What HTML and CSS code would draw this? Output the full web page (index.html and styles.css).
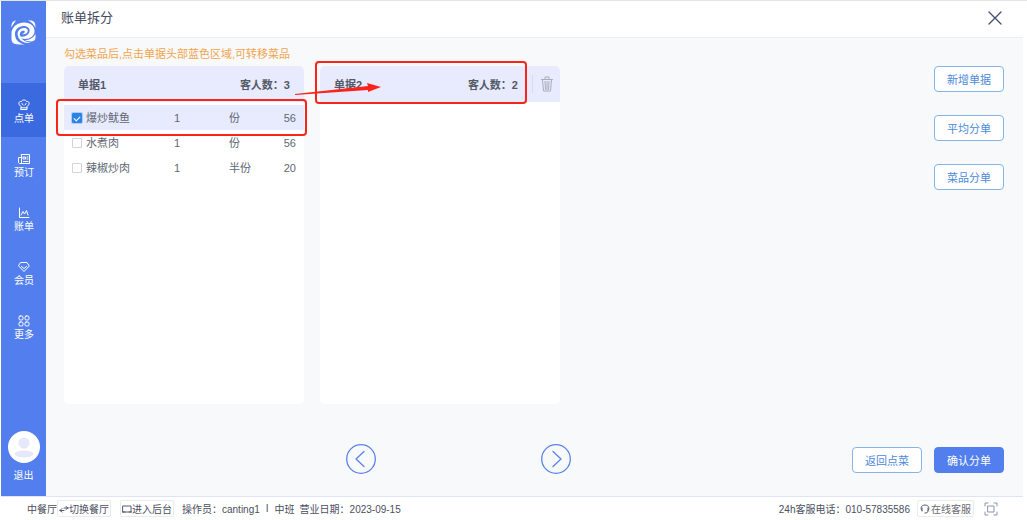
FILE: index.html
```html
<!DOCTYPE html>
<html lang="zh-CN">
<head>
<meta charset="utf-8">
<meta name="viewport" content="width=device-width, initial-scale=1">
<title>账单拆分</title>
<link rel="stylesheet" href="styles.css">
</head>
<body>
<div class="app">
  <div class="workspace">
    <nav class="sidebar">
      <svg class="logo" viewBox="0 0 25 25" aria-label="logo">
        <path fill="#fff" d="M5 .5C1.500 1 .5 3 .3 7.500C2 4.500 3.500 2.500 5 .5Z"/>
        <path fill="#fff" d="M17 .5H20C23.500 1 24.500 3 24.500 8C23 4.500 20.500 2 17 .5Z"/>
        <path fill="#fff" d="M.5 12C2 6 7 2.500 13 2.500C20 2.500 24 6.500 23.500 12C23 17 17 20 11 18.500C9.500 18 8.500 17 8 16C11 17.500 16 16.500 18 13C20 9 17 6 13 6C7 6 3.500 10 4 15C4.500 20 8 23.500 14 24.500C5 25 .5 24 .5 19Z"/>
        <path fill="#fff" d="M7 16C5.500 11.500 9 8 13 8C16 8 17.500 10 16.500 12C15.500 14 13 14.500 11 14C13 13.500 14.500 12 13.500 11C12 10 9 11 8.800 14C8.800 19 14 22 20 22.500C14 24 8 21 7 16Z"/>
        <path fill="#fff" d="M24.500 14V18C24 20.500 22.500 21.500 20 21.500C17 21.500 15 21 14 20.300C19 20 22.500 17.500 24.500 14Z"/>
      </svg>
      <ul class="menu">
        <li><a class="menu-item active" href="#">
          <svg class="menu-icon" viewBox="0 0 12 12"><path d="M3 7.500L1.500 6C0 4 1.500 2 3.500 2.500C4 .5 8 .5 8.500 2.500C10.500 2 12 4 10.500 6L9 7.500V10.500H3ZM3 8.800H9M4 4.500L5 6M8 4.500L7 6"/></svg>
          <span>点单</span></a></li>
        <li><a class="menu-item" href="#">
          <svg class="menu-icon" viewBox="0 0 12 12"><path d="M3.500 1.500H11.500V10.500H2C1 10.500.5 10 .5 9V4.500H3.500ZM3.500 4V10M5.500 4H7.500V6H5.500ZM9 4H10M9 6H10M5.500 8.500H10"/></svg>
          <span>预订</span></a></li>
        <li><a class="menu-item" href="#">
          <svg class="menu-icon" viewBox="0 0 12 12"><path d="M1.500 1V10.500H11M3 8L5 4.500L6.500 7L8.500 3.500L10 8"/></svg>
          <span>账单</span></a></li>
        <li><a class="menu-item" href="#">
          <svg class="menu-icon" viewBox="0 0 12 12"><path d="M3 1.500H9L11.300 5L6 10.500L.7 5ZM3.500 5.500L6 7.500L8.500 5.500"/></svg>
          <span>会员</span></a></li>
        <li><a class="menu-item" href="#">
          <svg class="menu-icon" viewBox="0 0 12 12"><rect x="1" y="1" width="4" height="4" rx="1.200"/><rect x="7" y="1" width="4" height="4" rx="1.200"/><rect x="1" y="7" width="4" height="4" rx="1.200"/><rect x="7" y="7" width="4" height="4" rx="1.200"/></svg>
          <span>更多</span></a></li>
      </ul>
      <a class="logout" href="#">
        <svg class="avatar" viewBox="0 0 32 32"><circle cx="16" cy="16" r="16" fill="#fff"/><circle cx="16" cy="12" r="5.500" fill="#e3e9fb"/><ellipse cx="16" cy="23" rx="9.500" ry="3.500" fill="#e3e9fb"/></svg>
        <span>退出</span>
      </a>
    </nav>
    <div class="page">
      <header class="titlebar">
        <h1>账单拆分</h1>
        <button class="close" type="button" aria-label="关闭"><svg viewBox="0 0 14 14"><path d="M1 1L13 13M13 1L1 13"/></svg></button>
      </header>
      <main class="content">
        <section class="split">
          <p class="tip">勾选菜品后,点击单据头部蓝色区域,可转移菜品</p>
          <div class="bills">
            <article class="bill">
              <header class="bill-head"><h2>单据1</h2><span>客人数：3</span></header>
              <table class="dishes">
                <colgroup><col><col class="col-count"><col class="col-unit"><col class="col-price"></colgroup>
                <tr class="selected"><td><label><input type="checkbox" checked>爆炒鱿鱼</label></td><td>1</td><td>份</td><td class="price">56</td></tr>
                <tr><td><label><input type="checkbox">水煮肉</label></td><td>1</td><td>份</td><td class="price">56</td></tr>
                <tr><td><label><input type="checkbox">辣椒炒肉</label></td><td>1</td><td>半份</td><td class="price">20</td></tr>
              </table>
              <div class="mark mark-row"></div>
            </article>
            <article class="bill">
              <header class="bill-head has-delete"><h2>单据2</h2><span>客人数：2</span>
                <button class="delete" type="button" aria-label="删除"><svg viewBox="0 0 12 16"><path d="M.5 3.500H11.500M4 3V1H8V3M1.500 4L2.500 15H9.500L10.500 4M4 5.500L4.500 13.500M6 5.500V13.500M8 5.500L7.500 13.500"/></svg></button>
              </header>
              <div class="mark mark-head"></div>
              <svg class="arrow" viewBox="0 0 90 16"><path d="M1 12L74 4L73 1L87 5L74 10V8L1 13Z" fill="#f9251b"/></svg>
            </article>
          </div>
          <div class="pager">
            <button type="button" aria-label="上一页"><svg viewBox="0 0 30 30"><circle cx="15" cy="15" r="14.300"/><path d="M18 7.500L10 15L18 22.500"/></svg></button>
            <button type="button" aria-label="下一页"><svg viewBox="0 0 30 30"><circle cx="15" cy="15" r="14.300"/><path d="M12 7.500L20 15L12 22.500"/></svg></button>
          </div>
        </section>
        <aside class="actions">
          <div class="action-list">
            <button class="btn" type="button">新增单据</button>
            <button class="btn" type="button">平均分单</button>
            <button class="btn" type="button">菜品分单</button>
          </div>
          <div class="confirm">
            <button class="btn" type="button">返回点菜</button>
            <button class="btn primary" type="button">确认分单</button>
          </div>
        </aside>
      </main>
    </div>
  </div>
  <footer class="statusbar">
    <span>中餐厅</span>
    <button class="mini" type="button"><svg viewBox="0 0 10 10"><path d="M1 6.500H5M1 6.500L3 4.500M1 6.500L3 8M5 4H9M9 4L7 2.500M9 4L7 5.500"/></svg>切换餐厅</button>
    <button class="mini enter" type="button"><svg viewBox="0 0 10 10"><path d="M1 2H9V8H1ZM0 8H3M7 8H10"/></svg>进入后台</button>
    <span class="operator">操作员：canting1</span>
    <span class="bar">I</span>
    <span>中班</span>
    <span class="date">营业日期：2023-09-15</span>
    <span class="phone">24h客服电话：010-57835586</span>
    <button class="mini service" type="button"><svg viewBox="0 0 10 10"><path d="M2 6.500C0 5 1 1 5 1S10 5 8 6.500M2 4V7M8 4V7C8 8.500 7 9 5 9"/></svg>在线客服</button>
    <button class="fullscreen" type="button" aria-label="全屏"><svg viewBox="0 0 14 14"><path d="M1 4V1H4M10 1H13V4M13 10V13H10M4 13H1V10M4 4H10V10H4Z"/></svg></button>
  </footer>
</div>
</body>
</html>
```
FILE: styles.css
```css
* { box-sizing: border-box; }
body { margin: 0; font-family: "Liberation Sans", "Noto Sans CJK SC", sans-serif; font-size: 11px; color: #606773; background: #fff; }
button { font: inherit; color: inherit; background: none; border: 0; padding: 0; margin: 0; cursor: pointer; }
a { color: inherit; text-decoration: none; }
h1, h2, p, ul { margin: 0; padding: 0; font-size: inherit; }
svg { display: block; fill: none; stroke-linecap: round; stroke-linejoin: round; }

.app { min-height: 100vh; display: flex; flex-direction: column; border-top: 1px solid #e6e6e8; padding: 0 4px 0 1px; }
.workspace { flex: 1; display: flex; }

.sidebar { width: 45px; background: #527fed; color: #fff; display: flex; flex-direction: column; align-items: center; padding: 19px 0 13px; }
.logo { width: 25px; height: 25px; }
.menu { list-style: none; width: 100%; padding-top: 38px; }
.menu-item { height: 54px; display: flex; flex-direction: column; align-items: center; justify-content: center; gap: 1px; padding: 4px 0 0 1px; font-size: 10px; line-height: 14px; }
.menu-item.active { background: #3b6ae0; }
.menu-icon { width: 12px; height: 12px; stroke: #fff; }
.logout { margin-top: auto; display: flex; flex-direction: column; align-items: center; gap: 6px; font-size: 10px; line-height: 14px; }
.avatar { width: 32px; height: 32px; }

.page { flex: 1; display: flex; flex-direction: column; }
.titlebar { height: 37px; padding: 0 21px 2px 15px; display: flex; align-items: center; justify-content: space-between; background: #fff; border-bottom: 1px solid #e9effa; }
.titlebar h1 { font-size: 13px; line-height: 18px; font-weight: 400; color: #454b5e; }
.close svg { width: 14px; height: 14px; stroke: #454c70; stroke-width: 1.300; }

.content { flex: 1; display: flex; justify-content: space-between; background: #f7f9fb; }
.split { display: flex; flex-direction: column; padding: 8px 0 22px 18px; }
.tip { color: #f2a44c; line-height: 16px; }
.bills { flex: 1; display: flex; gap: 16px; padding-top: 4px; }
.bill { position: relative; width: 240px; background: #fff; border-radius: 5px; }
.bill-head { height: 36px; padding: 0 14px; display: flex; align-items: center; justify-content: space-between; background: #e8ebfe; border-radius: 5px 5px 0 0; font-weight: 700; color: #535966; }
.has-delete { padding-right: 0; }
.has-delete span { margin-left: auto; }
.delete { width: 28px; height: 18px; margin-left: 14px; border-left: 1px solid #d8dbe9; display: flex; align-items: center; justify-content: center; }
.delete svg { width: 12px; height: 16px; stroke: #a9acb9; }
.dishes { width: 100%; table-layout: fixed; border-collapse: collapse; margin-top: 3px; }
.dishes td { height: 25px; padding: 0; line-height: 16px; }
.dishes .price { text-align: right; padding-right: 8px; }
.dishes label { display: flex; align-items: center; gap: 4px; padding-left: 8px; }
.dishes input { appearance: none; width: 10px; height: 10px; margin: 0; border: 1px solid #d0d3d8; border-radius: 1px; background: #fff; }
.dishes input:checked { border-color: #2b83e8; background: #2b83e8; display: grid; place-items: center; box-shadow: 0 0 0 1px #a9cdf8; }
.dishes input:checked::before { content: ""; width: 5px; height: 3px; border: solid #fff; border-width: 0 0 1px 1px; transform: rotate(-45deg); }
.selected { background: #e8ebfe; }
.col-count { width: 55px; }
.col-unit { width: 38px; }
.col-price { width: 37px; }

.mark { position: absolute; border: 2px solid #f9251b; border-radius: 4px; pointer-events: none; }
.mark-row { left: -8px; right: -3px; top: 33px; height: 37px; }
.mark-head { left: -5px; width: 212px; top: -5px; height: 43px; }
.arrow { position: absolute; left: -26px; top: 16px; width: 90px; height: 16px; pointer-events: none; }

.pager { display: flex; gap: 165px; padding: 40px 0 0 282px; }
.pager svg { width: 30px; height: 30px; stroke: #5b82e9; stroke-width: 1.300; }

.actions { display: flex; flex-direction: column; justify-content: space-between; align-items: flex-end; padding: 28px 19px 23px 0; }
.action-list { display: flex; flex-direction: column; gap: 23px; }
.confirm { display: flex; gap: 12px; }
.btn { width: 70px; height: 26px; border: 1px solid #86b4e6; border-radius: 4px; background: #fff; color: #4d89d9; }
.btn.primary { border-color: #527fed; background: #527fed; color: #fff; }

.statusbar { height: 24px; display: flex; align-items: center; padding: 0 25px 0 26px; border-top: 1px solid #dce4fb; font-size: 10px; color: #4b5060; white-space: nowrap; }
.mini { height: 17px; display: flex; align-items: center; padding: 0 1px; border: 1px solid #ebebed; border-radius: 2px; }
.mini svg { width: 10px; height: 10px; stroke: #555b70; }
.enter { margin-left: 9px; }
.operator { margin-left: 8px; }
.bar { margin: 0 6px; }
.date { margin-left: 5px; }
.phone { margin-left: auto; }
.service { margin: 0 10px 0 7px; padding: 0 2px; gap: 1px; color: #686a70; }
.fullscreen svg { width: 14px; height: 14px; stroke: #8c92b5; }
```
